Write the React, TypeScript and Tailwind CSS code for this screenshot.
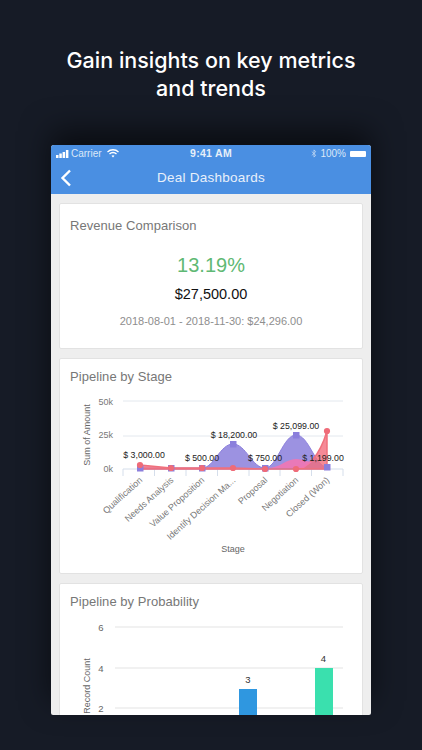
import React from "react";

const sans = "font-['Liberation_Sans',Arial,sans-serif]";
const stages = ["Qualification", "Needs Analysis", "Value Proposition", "Identify Decision Ma...", "Proposal", "Negotiation", "Closed (Won)"];
const cx = [140, 171, 202, 233, 265, 296, 327];

function StageChart() {
  // svg coordinates = page x - 60, page y - 385
  const X = (v: number) => v - 60;
  const Y = (v: number) => v - 385;
  const P = (x: number, y: number) => `${X(x)} ${Y(y)}`;
  const purple = `M${P(140, 468)} L${P(202, 468)} C${P(214, 468)} ${P(220, 444)} ${P(233, 444)} C${P(246, 444)} ${P(252, 468)} ${P(265, 468)} C${P(277, 468)} ${P(283, 435)} ${P(296, 435)} C${P(309, 435)} ${P(315, 467)} ${P(327, 467)} L${P(327, 469)} L${P(140, 469)} Z`;
  const red = `M${P(140, 465)} L${P(171, 468)} L${P(202, 468)} L${P(233, 468)} L${P(265, 469)} L${P(296, 469)} C${P(306, 469)} ${P(319, 458)} ${P(327, 431)} L${P(327, 469)} L${P(140, 469)} Z`;
  const pink = `M${P(268, 468)} C${P(280, 468)} ${P(286, 459)} ${P(296, 459)} C${P(303, 459)} ${P(307, 462)} ${P(312, 462)} L${P(304, 468)} Z`;
  const ticks = [123, 154.5, 186, 217.5, 249, 280, 311.5, 343];
  return (
    <svg width="302" height="188" viewBox="0 0 302 188" className="block" fontFamily="'Liberation Sans', Arial, sans-serif">
      {[401, 436, 469].map((y) => (
        <line key={y} x1={X(123)} x2={X(343)} y1={Y(y)} y2={Y(y)} stroke={y === 469 ? "#d5deeb" : "#e3e8ee"} strokeWidth="1" />
      ))}
      {ticks.map((t) => (
        <line key={t} x1={X(t)} x2={X(t)} y1={Y(469)} y2={Y(476)} stroke="#d5deeb" />
      ))}
      {[["50k", 406], ["25k", 439], ["0k", 473]].map(([t, y]) => (
        <text key={t as string} x={X(113)} y={Y(y as number) - 1} fontSize="9" textAnchor="end" fill="#777">{t}</text>
      ))}
      <text transform={`translate(${X(90)} ${Y(435)}) rotate(-90)`} fontSize="9" textAnchor="middle" fill="#666">Sum of Amount</text>
      <path d={purple} fill="#8b7fdc" fillOpacity="0.85" stroke="#8b7fdc" />
      <path d={red} fill="#f26d7d" fillOpacity="0.8" stroke="#f0707c" strokeWidth="1.5" />
      <path d={pink} fill="#f277b4" fillOpacity="0.9" />
      {[[140, 468], [171, 468], [202, 468], [233, 444], [265, 468], [296, 435], [327, 467]].map(([x, y]) => (
        <rect key={x} x={X(x) - 3} y={Y(y) - 3} width="6.5" height="6.5" fill="#8b7fdc" />
      ))}
      {[[140, 465], [171, 468], [202, 468], [233, 468], [265, 469], [296, 469], [327, 431]].map(([x, y]) => (
        <circle key={x} cx={X(x)} cy={Y(y)} r="3.1" fill="#ef6b78" />
      ))}
      {[["$ 3,000.00", 144, 458], ["$ 500.00", 202, 461], ["$ 18,200.00", 234, 438], ["$ 750.00", 265, 461], ["$ 25,099.00", 296, 429], ["$ 1,199.00", 323, 461]].map(([t, x, y]) => (
        <text key={t as string} x={X(x as number)} y={Y(y as number)} fontSize="8.8" textAnchor="middle" fill="#222">{t}</text>
      ))}
      {stages.map((s, i) => (
        <text key={s} transform={`translate(${X(cx[i]) + 3} ${Y(481)}) rotate(-42)`} fontSize="9" textAnchor="end" fill="#777">{s}</text>
      ))}
      <text x={X(233)} y={Y(552)} fontSize="9" textAnchor="middle" fill="#666">Stage</text>
    </svg>
  );
}

function ProbabilityChart() {
  const X = (v: number) => v - 60;
  const Y = (v: number) => v - 610;
  return (
    <svg width="302" height="121" viewBox="0 0 302 121" className="block" fontFamily="'Liberation Sans', Arial, sans-serif">
      {[627, 668, 708].map((y) => (
        <line key={y} x1={X(115)} x2={X(343)} y1={Y(y)} y2={Y(y)} stroke="#e3e3e3" />
      ))}
      {[["6", 631], ["4", 672], ["2", 712]].map(([t, y]) => (
        <text key={t as string} x={X(101)} y={Y(y as number)} fontSize="9.5" textAnchor="middle" fill="#666">{t}</text>
      ))}
      <text transform={`translate(${X(90)} ${Y(686)}) rotate(-90)`} fontSize="9" textAnchor="middle" fill="#666">Record Count</text>
      <rect x={X(239)} y={Y(689)} width="18" height="40" fill="#2f97e0" />
      <rect x={X(315)} y={Y(668)} width="18" height="61" fill="#3ae0ae" />
      <text x={X(248)} y={Y(683)} fontSize="9.5" textAnchor="middle" fill="#333">3</text>
      <text x={X(323.5)} y={Y(662)} fontSize="9.5" textAnchor="middle" fill="#333">4</text>
    </svg>
  );
}

function CardTitle({ children }: { children: React.ReactNode }) {
  return <h2 className="text-[13px] leading-4 text-[#777] tracking-[0.05px]">{children}</h2>;
}

export default function App() {
  return (
    <div className={`h-[750px] w-[422px] overflow-hidden bg-[#161b26] ${sans} flex flex-col items-center`}>
      <h1 className="mt-[46px] w-full text-center font-['Inter',sans-serif] text-[21.5px] font-medium leading-[28px] text-white">
        Gain insights on key metrics
        <br />
        and trends
      </h1>
      <div className="mt-[43px] flex h-[570px] w-[320px] flex-col overflow-hidden rounded-t-[3px] rounded-b-[2px] bg-[#eeeeee] shadow-[0_-14px_30px_rgba(0,0,0,0.55)]">
        <header className="h-[49px] shrink-0 bg-[#4a8fe2] text-white">
          <div className="flex h-[17px] items-center justify-between px-[5px] text-[10px] text-[#dbe8f8]">
            <div className="flex w-[90px] items-center gap-[2px]">
              <svg width="15" height="8" viewBox="0 0 15 8" fill="#fff">
                <rect x="0" y="5" width="2.5" height="3" />
                <rect x="3.3" y="3.5" width="2.5" height="4.5" />
                <rect x="6.6" y="2" width="2.5" height="6" />
                <rect x="9.9" y="0" width="2.5" height="8" />
              </svg>
              <span className="-ml-[2px]">Carrier</span>
              <svg width="12" height="9" viewBox="0 0 24 18" fill="none" stroke="#fff" strokeWidth="2.6" className="ml-[3px]">
                <path d="M1 6 C7 0 17 0 23 6" />
                <path d="M5 10 C9 6 15 6 19 10" />
                <path d="M12 17 L9 13.5 C10.5 12 13.5 12 15 13.5 Z" fill="#fff" stroke="none" />
              </svg>
            </div>
            <span className="text-[10.5px] font-bold tracking-[0.3px] text-[#e6eff9]">9:41 AM</span>
            <div className="flex w-[90px] items-center justify-end gap-[3px]">
              <svg width="6" height="9" viewBox="0 0 6 10" fill="none" stroke="#cfe0f5" strokeWidth="0.8">
                <path d="M0.5 2.8 L5 7 L3 9 L3 1 L5 3 L0.5 7.2" />
              </svg>
              <span>100%</span>
              <span className="ml-[1px] h-[6px] w-[16px] rounded-[1px] bg-white" />
            </div>
          </div>
          <div className="relative flex h-[32px] items-center justify-center">
            <svg width="12" height="18" viewBox="0 0 12 18" fill="none" stroke="#fff" strokeWidth="2.4" className="absolute left-[9px] top-[7px]">
              <path d="M10 1.5 L2.5 9 L10 16.5" />
            </svg>
            <span className="text-[13.5px] font-normal tracking-[0.25px] text-[#e8f0fa]">Deal Dashboards</span>
          </div>
        </header>
        <main className="flex flex-col gap-[9px] px-[8px] pt-[9px]">
          <section className="h-[146px] shrink-0 rounded-[2px] border border-[#e2e2e2] bg-white px-[10px] pt-[14px]">
            <CardTitle>Revenue Comparison</CardTitle>
            <p className="mt-[19px] text-center text-[20px] leading-6 text-[#5fb974]">13.19%</p>
            <p className="mt-[7px] text-center text-[14.5px] leading-5 text-[#111]">$27,500.00</p>
            <p className="mt-[9px] text-center text-[11px] leading-4 text-[#8e8e8e]">2018-08-01 - 2018-11-30: $24,296.00</p>
          </section>
          <section className="h-[216px] shrink-0 rounded-[2px] border border-[#e2e2e2] bg-white">
            <div className="px-[10px] pt-[10px]">
              <CardTitle>Pipeline by Stage</CardTitle>
            </div>
            <StageChart />
          </section>
          <section className="h-[216px] shrink-0 rounded-[2px] border border-[#e2e2e2] bg-white">
            <div className="px-[10px] pt-[10px]">
              <CardTitle>Pipeline by Probability</CardTitle>
            </div>
            <ProbabilityChart />
          </section>
        </main>
      </div>
    </div>
  );
}
